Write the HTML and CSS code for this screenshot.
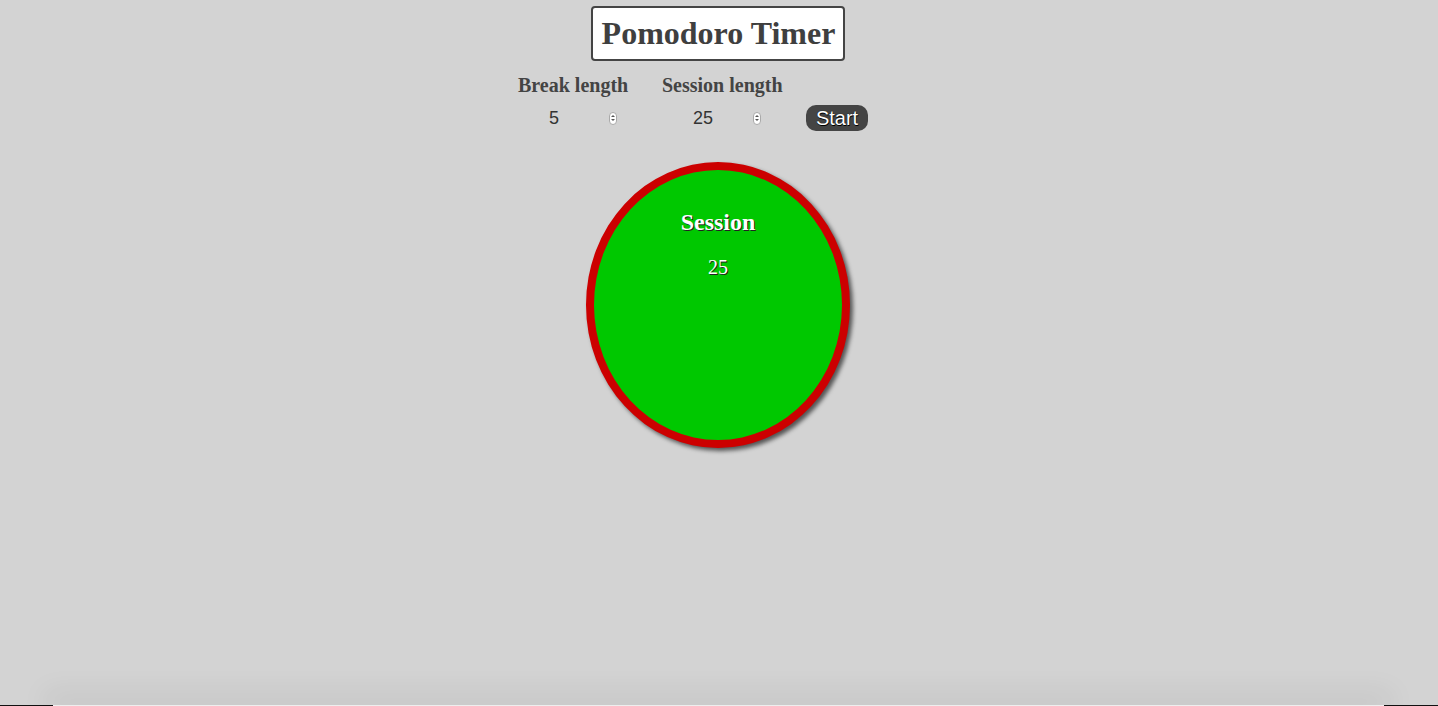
FILE: index.html
```html
<!DOCTYPE html>
<html>
<head>
<meta charset="utf-8">
<title>Pomodoro Timer</title>
<link rel="stylesheet" href="styles.css">
</head>
<body>
<header class="header">
  <h1 class="title">Pomodoro Timer</h1>
</header>
<section class="controls">
  <div class="field">
    <div class="label">Break length</div>
    <div class="value-row">
      <span class="value">5</span>
      <span class="spinner"><span class="up"></span><span class="down"></span></span>
    </div>
  </div>
  <div class="field field-session">
    <div class="label">Session length</div>
    <div class="value-row">
      <span class="value">25</span>
      <span class="spinner"><span class="up"></span><span class="down"></span></span>
    </div>
  </div>
  <button class="start">Start</button>
</section>
<main class="clock-wrap">
  <div class="clock">
    <div class="clock-label">Session</div>
    <div class="clock-time">25</div>
  </div>
</main>
<div class="window-edge"></div>
</body>
</html>
```
FILE: styles.css
```css
html, body {
  margin: 0;
  padding: 0;
  height: 100%;
}
body {
  background: #d3d3d3;
  font-family: "Liberation Serif", "Times New Roman", serif;
  color: #444;
  overflow: hidden;
}
.header {
  display: flex;
  justify-content: center;
  padding-top: 6px;
}
.title {
  margin: 0 0 0 -2px;
  background: #fff;
  border: 2px solid #444;
  border-radius: 4px;
  font-size: 32px;
  font-weight: bold;
  line-height: 35px;
  padding: 8px 8px 8px 9px;
  color: #3f3f3f;
}
.controls {
  display: flex;
  align-items: flex-end;
  width: 350px;
  padding-right: 52px;
  margin: 13px auto 0;
}
.field {
  display: flex;
  flex-direction: column;
  width: 110px;
}
.field-session {
  margin-left: 34px;
  width: 120px;
}
.label {
  font-size: 20px;
  font-weight: bold;
  line-height: 22px;
  white-space: nowrap;
  color: #444;
}
.value-row {
  display: flex;
  align-items: center;
  height: 26px;
  margin-top: 9px;
}
.value {
  font-family: "Liberation Sans", Arial, sans-serif;
  font-size: 18px;
  color: #333;
  padding-left: 31px;
  width: 60px;
}
.spinner {
  display: flex;
  flex-direction: column;
  align-items: center;
  justify-content: center;
  gap: 2px;
  width: 6px;
  height: 11px;
  background: #fff;
  border: 1px solid #aaa;
  border-radius: 4px;
}
.up, .down {
  width: 0;
  height: 0;
  border-left: 2px solid transparent;
  border-right: 2px solid transparent;
}
.up { border-bottom: 2px solid #555; }
.down { border-top: 2px solid #555; }
.start {
  margin-left: 24px;
  width: 62px;
  height: 26px;
  background: #444;
  color: #fff;
  border: none;
  border-radius: 10px;
  font-family: "Liberation Sans", Arial, sans-serif;
  font-size: 20px;
  line-height: 26px;
  padding: 0 0 2px;
  text-shadow: 0.5px 0.5px 0 #000, 0 0 1px #000;
}
.clock-wrap {
  display: flex;
  justify-content: center;
  margin-top: 31px;
}
.clock {
  width: 248px;
  height: 270px;
  border: 8px solid #cc0000;
  border-radius: 50%;
  background: #00c800;
  box-shadow: 3px 3px 4px rgba(0, 0, 0, 0.6);
  text-align: center;
  color: #fff;
  margin-left: -2px;
}
.clock-label {
  font-size: 24px;
  font-weight: bold;
  margin-top: 39px;
  text-shadow: 1px 1px 0 #222;
}
.clock-time {
  font-size: 20px;
  margin-top: 20px;
  text-shadow: 1px 1px 0 #222;
}
.window-edge {
  position: fixed;
  left: 0;
  right: 0;
  bottom: 0;
  height: 1px;
  background: #111;
}
.window-edge::before {
  content: "";
  position: absolute;
  left: 53px;
  right: 54px;
  top: 0;
  height: 1px;
  background: #eee;
  box-shadow: 0 -4px 28px 8px rgba(0, 0, 0, 0.08);
}
```
